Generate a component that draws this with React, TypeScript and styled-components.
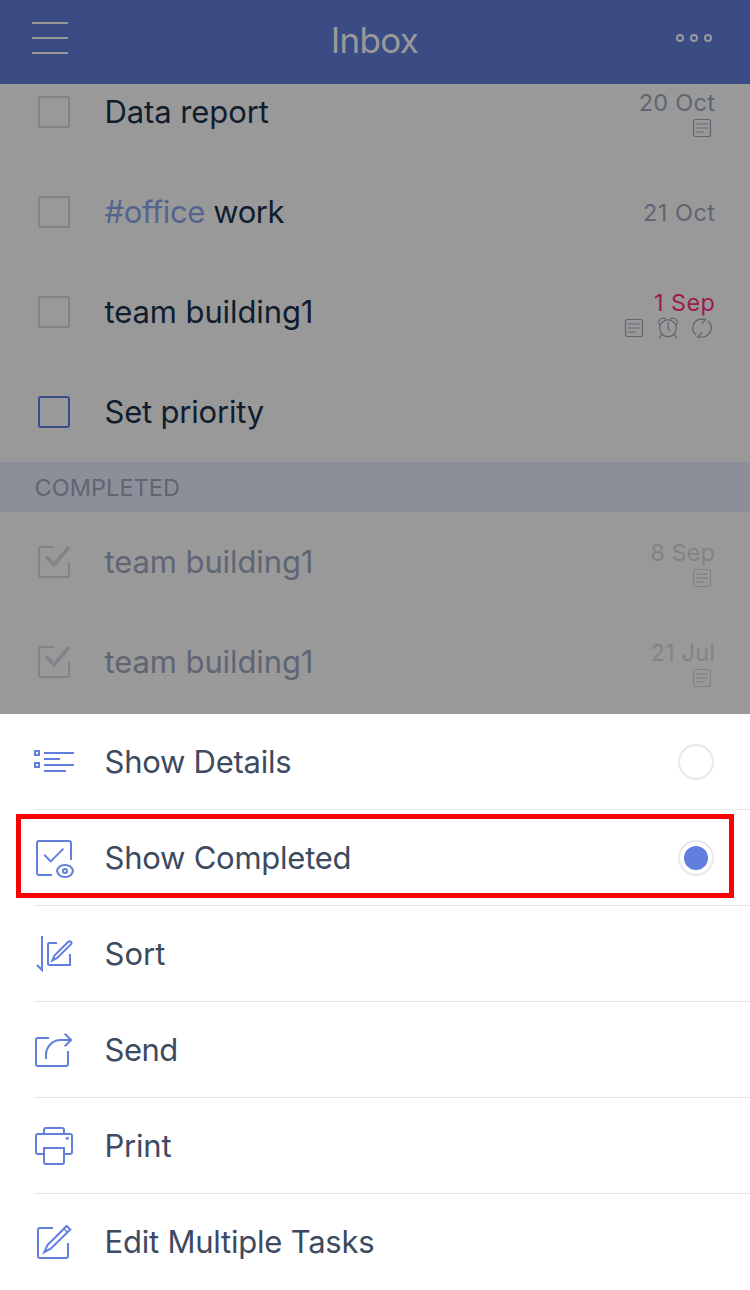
import React from "react";
import styled, { createGlobalStyle } from "styled-components";

const GlobalStyle = createGlobalStyle`
  * { box-sizing: border-box; }
  body {
    margin: 0;
    background: #fff;
    font-family: Inter, "Liberation Sans", sans-serif;
  }
`;

const BLUE = "#627fde";
const MUTED = "#5f6573";
const FAINT = "#828288";

const Screen = styled.div`
  position: relative;
  width: 750px;
  height: 1290px;
  overflow: hidden;
  display: flex;
  flex-direction: column;
`;

const Header = styled.header`
  flex: none;
  height: 84px;
  padding: 0 34px 8px 32px;
  display: grid;
  grid-template-columns: 40px 1fr 40px;
  align-items: center;
  background: #3b4c85;
  color: #999;
`;

const Title = styled.h1`
  margin: 0;
  padding: 4px 0 0 1px;
  font-size: 35px;
  font-weight: 370;
  line-height: 44px;
  text-align: center;
  letter-spacing: -0.7px;
`;

const TaskList = styled.main`
  flex: none;
  height: 630px;
  overflow: hidden;
  background: #999;
`;

const TaskRow = styled.div<{ $first?: boolean }>`
  height: 100px;
  margin-top: ${(p) => (p.$first ? "-22px" : "0")};
  padding: 0 35px 0 38px;
  display: flex;
  align-items: center;
`;

const Checkbox = styled.span<{ $color: string }>`
  width: 32px;
  height: 32px;
  border: 2px solid ${(p) => p.$color};
  border-radius: 3px;
`;

const TaskName = styled.span<{ $done?: boolean; $spacing: number }>`
  flex: 1;
  margin-left: 34.5px;
  padding-bottom: 1px;
  font-size: 31px;
  line-height: 40px;
  letter-spacing: ${(p) => p.$spacing}px;
  color: ${(p) => (p.$done ? MUTED : "#101d2e")};
`;

const Tag = styled.span`
  color: #55648f;
`;

const Meta = styled.div<{ $icons?: boolean }>`
  display: flex;
  flex-direction: column;
  align-items: flex-end;
  padding-top: ${(p) => (p.$icons ? 4 : 2)}px;
`;

const DateText = styled.span<{ $color: string; $spacing: number }>`
  font-size: 23.5px;
  line-height: 28px;
  letter-spacing: ${(p) => p.$spacing}px;
  margin-right: -${(p) => p.$spacing}px;
  color: ${(p) => p.$color};
`;

const MetaIcons = styled.div`
  display: flex;
  gap: 14px;
  margin-right: 3px;
`;

const SectionLabel = styled.h2`
  margin: 0;
  height: 50px;
  padding: 0 0 0 34.5px;
  font-size: 23.5px;
  font-weight: 400;
  line-height: 51px;
  letter-spacing: 0.05px;
  background: #8c8f98;
  color: ${MUTED};
`;

const ActiveTasks = styled.div`
  height: 378px;
  overflow: hidden;
`;

const Sheet = styled.section`
  flex: none;
  height: 576px;
  padding-left: 34px;
  background: #fff;
`;

const SheetRow = styled.div`
  height: 96px;
  padding: 0 36px 0 0;
  display: flex;
  align-items: center;
  border-bottom: 1px solid #e6e6e9;
  &:last-child {
    border-bottom-color: transparent;
  }
`;

const SheetLabel = styled.span<{ $spacing: number }>`
  flex: 1;
  margin-left: 28.5px;
  font-size: 31px;
  line-height: 40px;
  letter-spacing: ${(p) => p.$spacing}px;
  color: #3d4a5f;
`;

const Radio = styled.span`
  width: 36px;
  height: 36px;
  margin-top: 1px;
  border: 2px solid #e8e8ed;
  border-radius: 50%;
  display: grid;
  place-items: center;
`;

const RadioDot = styled.span`
  width: 24px;
  height: 24px;
  border-radius: 50%;
  background: ${BLUE};
`;

const Highlight = styled.div`
  position: absolute;
  left: 16px;
  top: 814px;
  width: 718px;
  height: 84px;
  border: 5px solid #f00;
`;

const MenuSvg = styled.svg`
  flex: none;
  width: 44px;
  height: 44px;
  margin: 1px 0 0 -2px;
  fill: none;
  stroke: ${BLUE};
  stroke-width: 2;
`;

const SmallSvg = styled.svg`
  width: 20px;
  height: 22px;
  fill: none;
  stroke-width: 1.2;
`;

const NoteIcon = ({ done }: { done?: boolean }) => (
  <SmallSvg viewBox="0 0 20 22" stroke={done ? FAINT : MUTED}>
    <rect x="1.5" y="2.5" width="17" height="17" rx="2" />
    <path
      d="M4 7h12M4 11h12M4 15h8"
      stroke={done ? "#83838a" : "#808289"}
      strokeWidth="2"
      strokeDasharray={done ? "1.4 0.6" : undefined}
    />
  </SmallSvg>
);

const AlarmIcon = () => (
  <SmallSvg viewBox="0 0 20 22" stroke={MUTED}>
    <circle cx="10" cy="11.3" r="8.4" />
    <path d="M1.9 8.2A4.3 4.3 0 0 1 8 2.2M12 2.2a4.3 4.3 0 0 1 6.1 6M10.2 5v6.5l2.3 2.3M3.8 17.7l-2.5 3.4M16.2 17.7l2.5 3.4" />
  </SmallSvg>
);

const RepeatIcon = () => (
  <SmallSvg viewBox="0 0 20 22" stroke={MUTED}>
    <path d="M4.3 18.1A9 9 0 0 1 8.4 2.2L13.6 2.3 9.8 6.8" />
    <path d="M15.8 3.9A9 9 0 0 1 11.6 19.8L5.6 20.1 10.2 15.4" />
  </SmallSvg>
);

const CheckedBox = () => (
  <svg width="32" height="32" fill="none" stroke={FAINT}>
    <path d="M16 1H3a2 2 0 0 0-2 2v26a2 2 0 0 0 2 2h26a2 2 0 0 0 2-2V16" strokeWidth="2" />
    <path d="M8.2 10.4l7.8 8.4L31 1.2" strokeWidth="3.6" />
  </svg>
);

const menuIcons = {
  details: (
    <>
      <rect x="3" y="11" width="4" height="4" />
      <rect x="3" y="23" width="4" height="4" />
      <path d="M12 13h30M12 19h16M12 25h30M12 31h22" />
    </>
  ),
  completed: (
    <>
      <path d="M20 39H7a2 2 0 0 1-2-2V7a2 2 0 0 1 2-2h30a2 2 0 0 1 2 2v17" />
      <path d="M12.3 18.8l6.4 6.6 12.7-12.8" />
      <path d="M25 35c.8-3.8 4-6 8-6s7.2 2.2 8 6c-.8 3.8-4 6-8 6s-7.2-2.2-8-6z" />
      <circle cx="33" cy="35" r="2" />
    </>
  ),
  sort: (
    <>
      <path d="M10 4v34l-5-5" />
      <path d="M25 11h-7.5a1.5 1.5 0 0 0-1.5 1.5v19a1.5 1.5 0 0 0 1.5 1.5H38V22" />
      <path d="M20.3 28.5l2.2-5L36.3 9.8q1.3-1.3 2.6 0t0 2.6L25.2 26z" />
    </>
  ),
  send: (
    <>
      <path d="M17 10H6a2 2 0 0 0-2 2v24a2 2 0 0 0 2 2h28a2 2 0 0 0 2-2V23" />
      <path d="M14 31v-4c0-8 6.5-15 14.5-15H39" />
      <path d="M32.7 5.7L39.2 12l-6.5 6.3" />
    </>
  ),
  print: (
    <>
      <path d="M12 10V6a2 2 0 0 1 2-2h16a2 2 0 0 1 2 2v4" />
      <path d="M12 30H6a2 2 0 0 1-2-2V12a2 2 0 0 1 2-2h32a2 2 0 0 1 2 2v16a2 2 0 0 1-2 2h-6" />
      <path d="M12 24h20v14a2 2 0 0 1-2 2H14a2 2 0 0 1-2-2z" />
      <circle cx="35.3" cy="14.3" r="1.5" fill={BLUE} stroke="none" />
    </>
  ),
  edit: (
    <>
      <path d="M21 8H8a2 2 0 0 0-2 2v26a2 2 0 0 0 2 2h26a2 2 0 0 0 2-2V23" />
      <path d="M12.3 32.2l3.2-7.2L34.7 6l3.6 3.4L19 28.5z" />
      <path d="M31.5 8.5l3.8 3.8M12 32.5l3-2.5" strokeWidth="1.3" />
    </>
  ),
};

type IconName = keyof typeof menuIcons;

interface Task {
  name: React.ReactNode;
  spacing: number;
  date?: string;
  dateSpacing?: number;
  overdue?: boolean;
  note?: boolean;
  reminders?: boolean;
  priority?: boolean;
  done?: boolean;
}

const activeTasks: Task[] = [
  { name: "Data report", spacing: -0.08, date: "20 Oct", dateSpacing: 0.3, note: true },
  { name: <><Tag>#office</Tag> work</>, spacing: -0.4, date: "21 Oct", dateSpacing: 0.5 },
  { name: "team building1", spacing: -0.1, date: "1 Sep", dateSpacing: 0.4, overdue: true, note: true, reminders: true },
  { name: "Set priority", spacing: -0.2, priority: true },
];

const doneTasks: Task[] = [
  { name: "team building1", spacing: -0.1, date: "8 Sep", dateSpacing: 0.1, note: true, done: true },
  { name: "team building1", spacing: -0.1, date: "21 Jul", dateSpacing: 0.2, note: true, done: true },
];

const menu: { icon: IconName; label: string; spacing: number; radio?: "on" | "off" }[] = [
  { icon: "details", label: "Show Details", spacing: -0.26, radio: "off" },
  { icon: "completed", label: "Show Completed", spacing: -0.24, radio: "on" },
  { icon: "sort", label: "Sort", spacing: 0 },
  { icon: "send", label: "Send", spacing: -0.5 },
  { icon: "print", label: "Print", spacing: -0.2 },
  { icon: "edit", label: "Edit Multiple Tasks", spacing: -0.22 },
];

const TaskItem = ({ task, first }: { task: Task; first?: boolean }) => (
  <TaskRow $first={first}>
    {task.done ? <CheckedBox /> : <Checkbox $color={task.priority ? "#3b4c8a" : FAINT} />}
    <TaskName $done={task.done} $spacing={task.spacing}>{task.name}</TaskName>
    {task.date && (
      <Meta $icons={task.note}>
        <DateText
          $color={task.overdue ? "#9c1c4e" : task.done ? FAINT : MUTED}
          $spacing={task.dateSpacing ?? 0}
        >
          {task.date}
        </DateText>
        {task.note && (
          <MetaIcons>
            <NoteIcon done={task.done} />
            {task.reminders && <AlarmIcon />}
            {task.reminders && <RepeatIcon />}
          </MetaIcons>
        )}
      </Meta>
    )}
  </TaskRow>
);

export default function App() {
  return (
    <Screen>
      <GlobalStyle />
      <Header>
        <svg width="36" height="32" stroke="#999" strokeWidth="2">
          <path d="M0 1h36M0 16h36M0 31h36" />
        </svg>
        <Title>Inbox</Title>
        <svg width="40" height="8" fill="none" stroke="#999" strokeWidth="2">
          <circle cx="4" cy="4" r="3" />
          <circle cx="18" cy="4" r="3" />
          <circle cx="32" cy="4" r="3" />
        </svg>
      </Header>
      <TaskList>
        <ActiveTasks>
          {activeTasks.map((t, i) => (
            <TaskItem key={i} task={t} first={i === 0} />
          ))}
        </ActiveTasks>
        <SectionLabel>COMPLETED</SectionLabel>
        {doneTasks.map((t, i) => (
          <TaskItem key={i} task={t} />
        ))}
      </TaskList>
      <Sheet>
        {menu.map((m) => (
          <SheetRow key={m.label}>
            <MenuSvg viewBox="0 0 44 44">{menuIcons[m.icon]}</MenuSvg>
            <SheetLabel $spacing={m.spacing}>{m.label}</SheetLabel>
            {m.radio && <Radio>{m.radio === "on" && <RadioDot />}</Radio>}
          </SheetRow>
        ))}
      </Sheet>
      <Highlight />
    </Screen>
  );
}
